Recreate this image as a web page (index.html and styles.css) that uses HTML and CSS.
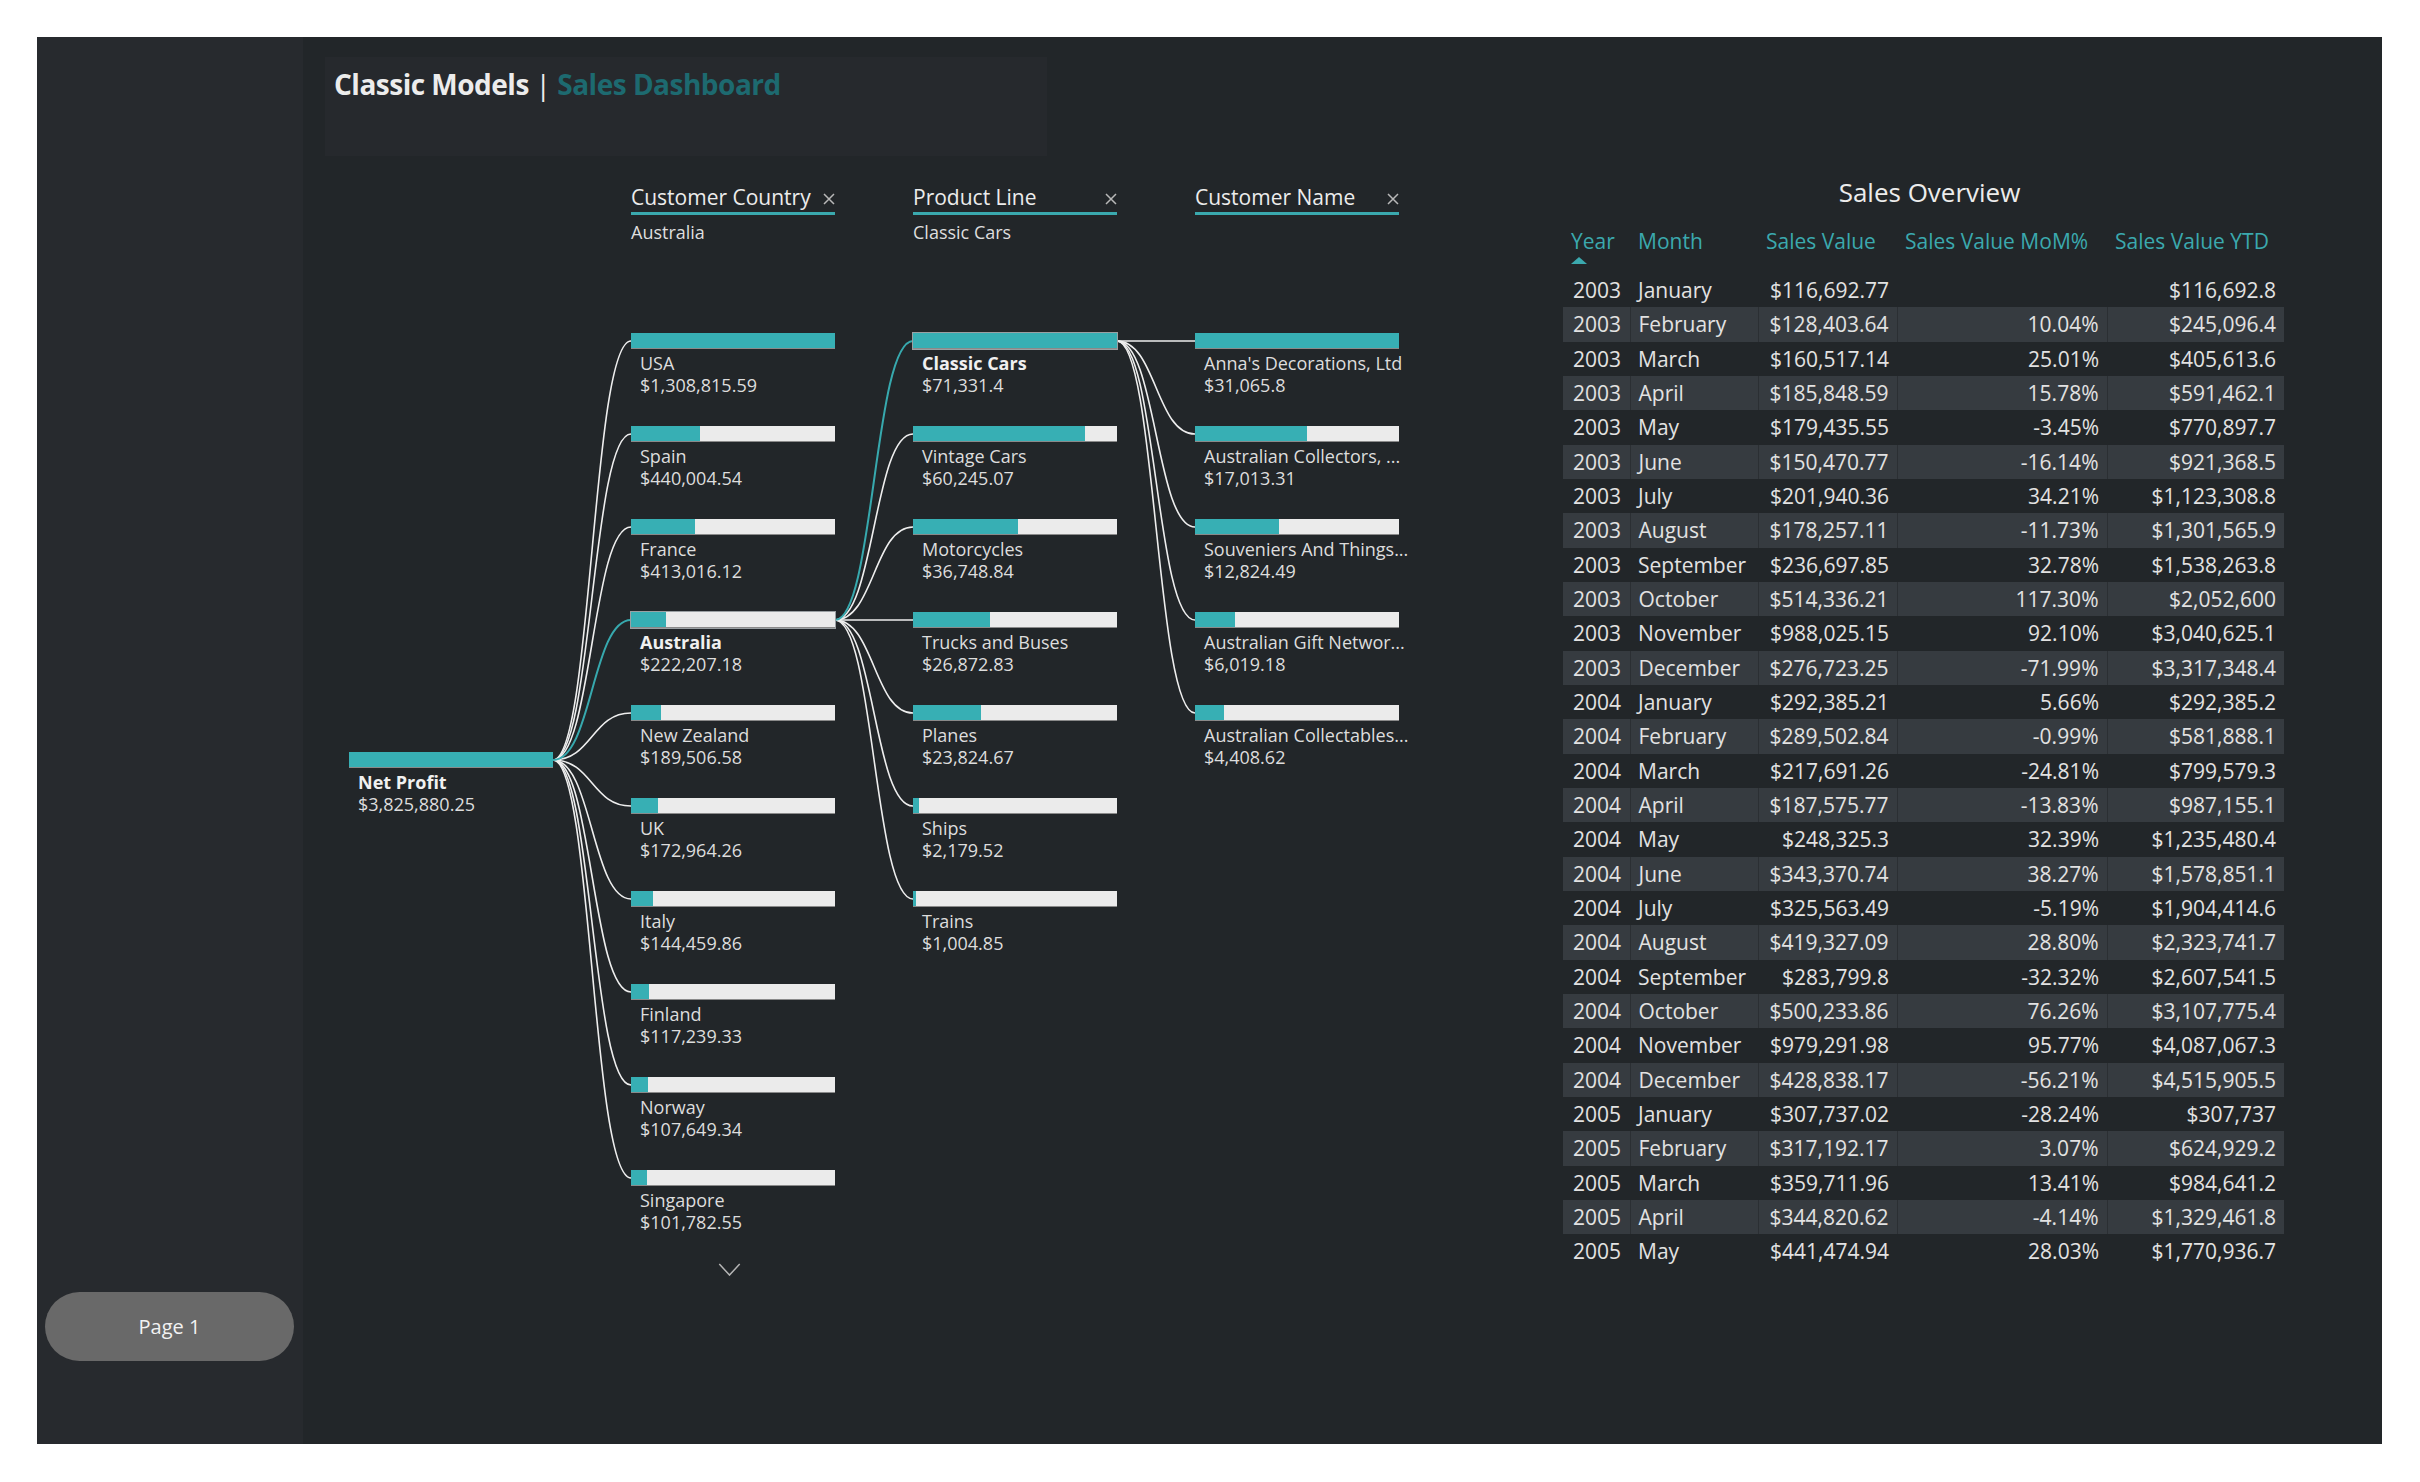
FILE: index.html
```html
<!DOCTYPE html>
<html lang="en">
<head>
<meta charset="utf-8">
<title>Classic Models | Sales Dashboard</title>
<link rel="stylesheet" href="styles.css">
</head>
<body>
<div class="canvas">
  <aside class="sidebar">
    <div class="page-btn">Page 1</div>
  </aside>
  <main class="main">
    <div class="title-box">
      <h1 class="title">Classic Models <span class="sep">|</span> <span class="accent">Sales Dashboard</span></h1>
    </div>
    <div class="content">
      <section class="tree">
        <svg class="links" width="1050" height="1120" viewBox="0 0 1050 1120">
          <g class="link">
            <path d="M204 590 C243 590 243 171 282 171"/>
            <path d="M204 590 C243 590 243 264 282 264"/>
            <path d="M204 590 C243 590 243 357 282 357"/>
            <path d="M204 590 C243 590 243 543 282 543"/>
            <path d="M204 590 C243 590 243 636 282 636"/>
            <path d="M204 590 C243 590 243 729 282 729"/>
            <path d="M204 590 C243 590 243 822 282 822"/>
            <path d="M204 590 C243 590 243 915 282 915"/>
            <path d="M204 590 C243 590 243 1008 282 1008"/>
            <path d="M486 450 C525 450 525 264 564 264"/>
            <path d="M486 450 C525 450 525 357 564 357"/>
            <path d="M486 450 C525 450 525 450 564 450"/>
            <path d="M486 450 C525 450 525 543 564 543"/>
            <path d="M486 450 C525 450 525 636 564 636"/>
            <path d="M486 450 C525 450 525 729 564 729"/>
            <path d="M768 171 C807 171 807 171 846 171"/>
            <path d="M768 171 C807 171 807 264 846 264"/>
            <path d="M768 171 C807 171 807 357 846 357"/>
            <path d="M768 171 C807 171 807 450 846 450"/>
            <path d="M768 171 C807 171 807 543 846 543"/>
          </g>
          <g class="link active">
            <path d="M204 590 C243 590 243 450 282 450"/>
            <path d="M486 450 C525 450 525 171 564 171"/>
          </g>
        </svg>

        <div class="col">
          <div class="col-head"></div>
          <div class="node root">
            <div class="bar"><span class="fill" style="width:100%"></span></div>
            <div class="label"><b>Net Profit</b><span>$3,825,880.25</span></div>
          </div>
        </div>

        <div class="col">
          <div class="col-head">
            <div class="head-row"><span class="head-name">Customer Country</span><svg class="x" viewBox="0 0 12 12"><path d="M1 1 L11 11 M11 1 L1 11"/></svg></div>
            <div class="head-line"></div>
            <div class="head-sub">Australia</div>
          </div>
          <div class="node"><div class="bar"><span class="fill" style="width:100%"></span></div><div class="label"><em>USA</em><span>$1,308,815.59</span></div></div>
          <div class="node"><div class="bar"><span class="fill" style="width:33.6%"></span></div><div class="label"><em>Spain</em><span>$440,004.54</span></div></div>
          <div class="node"><div class="bar"><span class="fill" style="width:31.6%"></span></div><div class="label"><em>France</em><span>$413,016.12</span></div></div>
          <div class="node selected"><div class="bar"><span class="fill" style="width:17%"></span></div><div class="label"><b>Australia</b><span>$222,207.18</span></div></div>
          <div class="node"><div class="bar"><span class="fill" style="width:14.5%"></span></div><div class="label"><em>New Zealand</em><span>$189,506.58</span></div></div>
          <div class="node"><div class="bar"><span class="fill" style="width:13.2%"></span></div><div class="label"><em>UK</em><span>$172,964.26</span></div></div>
          <div class="node"><div class="bar"><span class="fill" style="width:11%"></span></div><div class="label"><em>Italy</em><span>$144,459.86</span></div></div>
          <div class="node"><div class="bar"><span class="fill" style="width:9%"></span></div><div class="label"><em>Finland</em><span>$117,239.33</span></div></div>
          <div class="node"><div class="bar"><span class="fill" style="width:8.2%"></span></div><div class="label"><em>Norway</em><span>$107,649.34</span></div></div>
          <div class="node"><div class="bar"><span class="fill" style="width:7.8%"></span></div><div class="label"><em>Singapore</em><span>$101,782.55</span></div></div>
          <div class="more"><svg viewBox="0 0 24 14"><path d="M1 1 L12 13 L23 1"/></svg></div>
        </div>

        <div class="col">
          <div class="col-head">
            <div class="head-row"><span class="head-name">Product Line</span><svg class="x" viewBox="0 0 12 12"><path d="M1 1 L11 11 M11 1 L1 11"/></svg></div>
            <div class="head-line"></div>
            <div class="head-sub">Classic Cars</div>
          </div>
          <div class="node selected"><div class="bar"><span class="fill" style="width:100%"></span></div><div class="label"><b>Classic Cars</b><span>$71,331.4</span></div></div>
          <div class="node"><div class="bar"><span class="fill" style="width:84.5%"></span></div><div class="label"><em>Vintage Cars</em><span>$60,245.07</span></div></div>
          <div class="node"><div class="bar"><span class="fill" style="width:51.5%"></span></div><div class="label"><em>Motorcycles</em><span>$36,748.84</span></div></div>
          <div class="node"><div class="bar"><span class="fill" style="width:37.7%"></span></div><div class="label"><em>Trucks and Buses</em><span>$26,872.83</span></div></div>
          <div class="node"><div class="bar"><span class="fill" style="width:33.4%"></span></div><div class="label"><em>Planes</em><span>$23,824.67</span></div></div>
          <div class="node"><div class="bar"><span class="fill" style="width:3.1%"></span></div><div class="label"><em>Ships</em><span>$2,179.52</span></div></div>
          <div class="node"><div class="bar"><span class="fill" style="width:1.4%"></span></div><div class="label"><em>Trains</em><span>$1,004.85</span></div></div>
        </div>

        <div class="col">
          <div class="col-head">
            <div class="head-row"><span class="head-name">Customer Name</span><svg class="x" viewBox="0 0 12 12"><path d="M1 1 L11 11 M11 1 L1 11"/></svg></div>
            <div class="head-line"></div>
            <div class="head-sub"></div>
          </div>
          <div class="node"><div class="bar"><span class="fill" style="width:100%"></span></div><div class="label"><em>Anna's Decorations, Ltd</em><span>$31,065.8</span></div></div>
          <div class="node"><div class="bar"><span class="fill" style="width:54.8%"></span></div><div class="label"><em>Australian Collectors, ...</em><span>$17,013.31</span></div></div>
          <div class="node"><div class="bar"><span class="fill" style="width:41.3%"></span></div><div class="label"><em>Souveniers And Things...</em><span>$12,824.49</span></div></div>
          <div class="node"><div class="bar"><span class="fill" style="width:19.4%"></span></div><div class="label"><em>Australian Gift Networ...</em><span>$6,019.18</span></div></div>
          <div class="node"><div class="bar"><span class="fill" style="width:14.2%"></span></div><div class="label"><em>Australian Collectables...</em><span>$4,408.62</span></div></div>
        </div>
      </section>

      <section class="sales">
        <h2 class="sales-title">Sales Overview</h2>
        <table class="grid">
          <colgroup><col class="c-year"><col class="c-month"><col class="c-val"><col class="c-mom"><col class="c-ytd"></colgroup>
          <thead>
            <tr><th class="yr">Year<span class="sort"></span></th><th>Month</th><th>Sales Value</th><th>Sales Value MoM%</th><th>Sales Value YTD</th></tr>
          </thead>
          <tbody>
            <tr><td class="yr">2003</td><td>January</td><td class="num">$116,692.77</td><td class="num"></td><td class="num">$116,692.8</td></tr>
            <tr><td class="yr">2003</td><td>February</td><td class="num">$128,403.64</td><td class="num">10.04%</td><td class="num">$245,096.4</td></tr>
            <tr><td class="yr">2003</td><td>March</td><td class="num">$160,517.14</td><td class="num">25.01%</td><td class="num">$405,613.6</td></tr>
            <tr><td class="yr">2003</td><td>April</td><td class="num">$185,848.59</td><td class="num">15.78%</td><td class="num">$591,462.1</td></tr>
            <tr><td class="yr">2003</td><td>May</td><td class="num">$179,435.55</td><td class="num">-3.45%</td><td class="num">$770,897.7</td></tr>
            <tr><td class="yr">2003</td><td>June</td><td class="num">$150,470.77</td><td class="num">-16.14%</td><td class="num">$921,368.5</td></tr>
            <tr><td class="yr">2003</td><td>July</td><td class="num">$201,940.36</td><td class="num">34.21%</td><td class="num">$1,123,308.8</td></tr>
            <tr><td class="yr">2003</td><td>August</td><td class="num">$178,257.11</td><td class="num">-11.73%</td><td class="num">$1,301,565.9</td></tr>
            <tr><td class="yr">2003</td><td>September</td><td class="num">$236,697.85</td><td class="num">32.78%</td><td class="num">$1,538,263.8</td></tr>
            <tr><td class="yr">2003</td><td>October</td><td class="num">$514,336.21</td><td class="num">117.30%</td><td class="num">$2,052,600</td></tr>
            <tr><td class="yr">2003</td><td>November</td><td class="num">$988,025.15</td><td class="num">92.10%</td><td class="num">$3,040,625.1</td></tr>
            <tr><td class="yr">2003</td><td>December</td><td class="num">$276,723.25</td><td class="num">-71.99%</td><td class="num">$3,317,348.4</td></tr>
            <tr><td class="yr">2004</td><td>January</td><td class="num">$292,385.21</td><td class="num">5.66%</td><td class="num">$292,385.2</td></tr>
            <tr><td class="yr">2004</td><td>February</td><td class="num">$289,502.84</td><td class="num">-0.99%</td><td class="num">$581,888.1</td></tr>
            <tr><td class="yr">2004</td><td>March</td><td class="num">$217,691.26</td><td class="num">-24.81%</td><td class="num">$799,579.3</td></tr>
            <tr><td class="yr">2004</td><td>April</td><td class="num">$187,575.77</td><td class="num">-13.83%</td><td class="num">$987,155.1</td></tr>
            <tr><td class="yr">2004</td><td>May</td><td class="num">$248,325.3</td><td class="num">32.39%</td><td class="num">$1,235,480.4</td></tr>
            <tr><td class="yr">2004</td><td>June</td><td class="num">$343,370.74</td><td class="num">38.27%</td><td class="num">$1,578,851.1</td></tr>
            <tr><td class="yr">2004</td><td>July</td><td class="num">$325,563.49</td><td class="num">-5.19%</td><td class="num">$1,904,414.6</td></tr>
            <tr><td class="yr">2004</td><td>August</td><td class="num">$419,327.09</td><td class="num">28.80%</td><td class="num">$2,323,741.7</td></tr>
            <tr><td class="yr">2004</td><td>September</td><td class="num">$283,799.8</td><td class="num">-32.32%</td><td class="num">$2,607,541.5</td></tr>
            <tr><td class="yr">2004</td><td>October</td><td class="num">$500,233.86</td><td class="num">76.26%</td><td class="num">$3,107,775.4</td></tr>
            <tr><td class="yr">2004</td><td>November</td><td class="num">$979,291.98</td><td class="num">95.77%</td><td class="num">$4,087,067.3</td></tr>
            <tr><td class="yr">2004</td><td>December</td><td class="num">$428,838.17</td><td class="num">-56.21%</td><td class="num">$4,515,905.5</td></tr>
            <tr><td class="yr">2005</td><td>January</td><td class="num">$307,737.02</td><td class="num">-28.24%</td><td class="num">$307,737</td></tr>
            <tr><td class="yr">2005</td><td>February</td><td class="num">$317,192.17</td><td class="num">3.07%</td><td class="num">$624,929.2</td></tr>
            <tr><td class="yr">2005</td><td>March</td><td class="num">$359,711.96</td><td class="num">13.41%</td><td class="num">$984,641.2</td></tr>
            <tr><td class="yr">2005</td><td>April</td><td class="num">$344,820.62</td><td class="num">-4.14%</td><td class="num">$1,329,461.8</td></tr>
            <tr><td class="yr">2005</td><td>May</td><td class="num">$441,474.94</td><td class="num">28.03%</td><td class="num">$1,770,936.7</td></tr>
          </tbody>
        </table>
      </section>
    </div>
  </main>
</div>
</body>
</html>
```

FILE: styles.css
```css
* { box-sizing: border-box; }
html, body { margin: 0; padding: 0; background: #ffffff; }
body {
  font-family: "Open Sans", "Noto Sans", sans-serif;
  color: #e4e4e4;
}
.canvas {
  margin: 37px;
  width: 2345px;
  height: 1407px;
  display: flex;
}
.sidebar {
  width: 266px;
  background: #272a2e;
  display: flex;
  flex-direction: column;
  justify-content: flex-end;
  padding: 0 0 83px 8px;
}
.page-btn {
  width: 249px;
  height: 69px;
  border-radius: 35px;
  background: #696969;
  color: #f2f2f2;
  font-size: 20px;
  display: flex;
  align-items: center;
  justify-content: center;
}
.main {
  flex: 1;
  background: #222629;
  padding-top: 20px;
}
.title-box {
  margin-left: 22px;
  width: 722px;
  height: 99px;
  background: #26292d;
  padding: 9px 0 0 9px;
}
.title {
  margin: 0;
  font-size: 28px;
  line-height: 36px;
  letter-spacing: -0.5px;
  font-weight: 700;
  color: #ececec;
}
.title .accent { color: #1d6a70; }
.title .sep { font-weight: 400; }

.content {
  display: flex;
  margin-top: 14px;
}

/* decomposition tree */
.tree {
  position: relative;
  margin-left: 46px;
  display: flex;
  gap: 78px;
}
.links {
  position: absolute;
  left: 0;
  top: 0;
  overflow: visible;
}
.link path {
  fill: none;
  stroke: #eeeeee;
  stroke-width: 1.6;
}
.link.active path {
  stroke: #37a9ae;
  stroke-width: 2;
}
.col {
  width: 204px;
  position: relative;
  display: flex;
  flex-direction: column;
}
.col-head {
  height: 163px;
  padding-top: 14px;
}
.head-row {
  display: flex;
  justify-content: space-between;
  align-items: center;
  height: 26px;
  font-size: 21px;
  line-height: 26px;
  color: #ececec;
  white-space: nowrap;
}
.x {
  width: 12px;
  height: 12px;
  flex: none;
  margin-top: 3px;
}
.x path { stroke: #b8b8b8; stroke-width: 1.5; fill: none; }
.head-line {
  margin-top: 2px;
  height: 3px;
  background: #3aa9ae;
}
.head-sub {
  margin-top: 6px;
  font-size: 18px;
  line-height: 22px;
  color: #dedede;
}
.node {
  height: 93px;
}
.root { margin-top: 419px; }
.bar {
  height: 16px;
  background: #ebebeb;
  border-bottom: 1px solid #8a8a8a;
  display: flex;
}
.fill {
  display: block;
  height: 100%;
  background: #37afb4;
}
.node.selected .bar {
  outline: 1px solid #9aa0a3;
}
.label {
  margin-top: 3px;
  padding-left: 9px;
  display: flex;
  flex-direction: column;
  font-size: 18px;
  line-height: 22px;
  color: #dddddd;
  white-space: nowrap;
}
.label em { font-style: normal; }
.label b { font-weight: 700; color: #f0f0f0; }
.more {
  display: flex;
  justify-content: center;
  padding-right: 8px;
}
.more svg { width: 23px; height: 13px; }
.more path { fill: none; stroke: #b5b5b5; stroke-width: 1.6; }

/* sales overview table */
.sales {
  margin-left: 164px;
  width: 721px;
  padding-top: 7px;
}
.sales-title {
  margin: 0 0 21px 0;
  padding-left: 12px;
  font-size: 26px;
  line-height: 30px;
  font-weight: 400;
  text-align: center;
  color: #ececec;
}
.grid {
  width: 721px;
  table-layout: fixed;
  border-collapse: collapse;
  font-size: 21px;
}
.c-year { width: 67px; }
.c-month { width: 128px; }
.c-val { width: 139px; }
.c-mom { width: 210px; }
.c-ytd { width: 177px; }
.grid th {
  height: 45px;
  padding: 0 0 0 8px;
  vertical-align: top;
  text-align: left;
  font-weight: 400;
  line-height: 26px;
  color: #3ba9ae;
  white-space: nowrap;
}
.grid th.yr { padding-left: 8px; }
.sort {
  display: block;
  width: 0;
  height: 0;
  margin-top: 3px;
  border-left: 8px solid transparent;
  border-right: 8px solid transparent;
  border-bottom: 7px solid #3ba9ae;
}
.grid td {
  height: 34.33px;
  padding: 0 8px;
  line-height: 26px;
  white-space: nowrap;
  color: #e2e2e2;
}
.grid td.yr { padding-left: 10px; padding-right: 0; }
.grid td.num { text-align: right; }
.grid tbody tr:nth-child(even) td {
  background: #363b40;
  border-left: 1px solid #2b2f33;
}
.grid tbody tr:nth-child(even) td:first-child { border-left: 0; }
```
